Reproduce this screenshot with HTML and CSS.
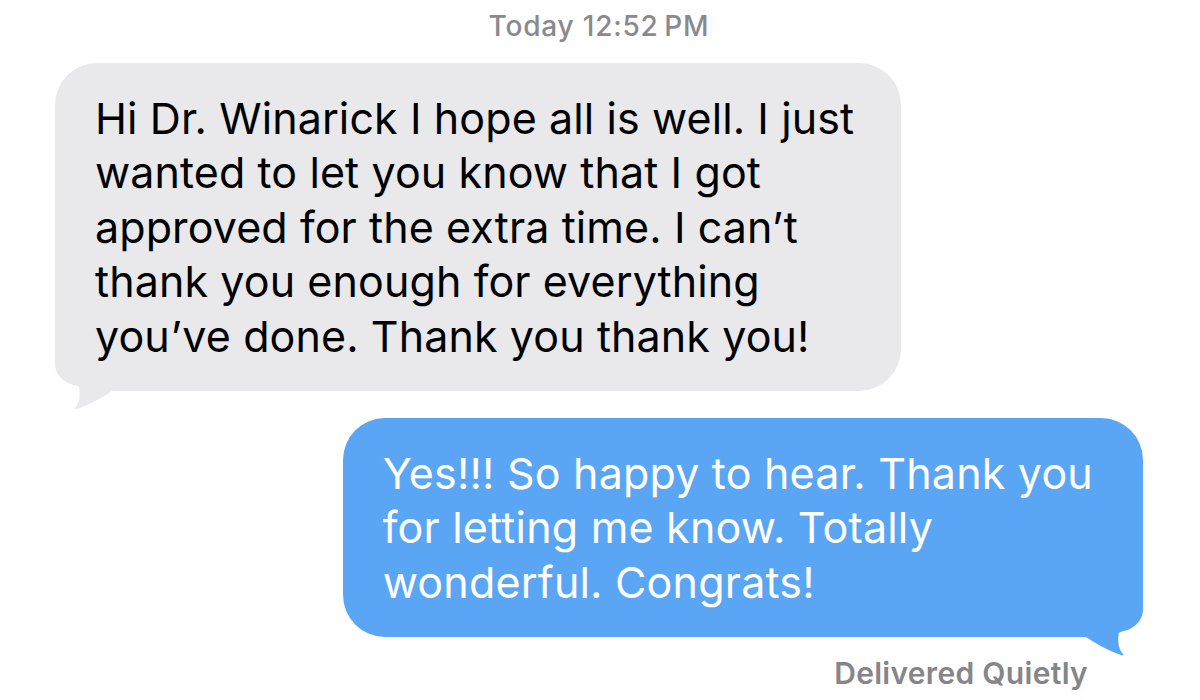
FILE: index.html
```html
<!DOCTYPE html>
<html lang="en">
<head>
    <meta charset="UTF-8">
    <meta name="viewport" content="width=device-width, initial-scale=1.0">
    <title>Messages</title>
    <link rel="stylesheet" href="styles.css">
</head>
<body>
    <div class="thread">
        <div class="stamp">Today 12:52&#8201;PM</div>

        <div class="bubble bubble-in">
            <svg class="tail tail-in" viewBox="0 0 70 70" width="70" height="70">
                <path d="M70,0 L70,22 C70,35 60,43 46,45 C44,55 46,63 50,67 C51,68 50,69 48,68 C34,63 22,56 13,50 L5,0 Z"/>
            </svg>
            <p class="text">
                Hi Dr. Winarick I hope all is well. I just<br>
                wanted to let you know that I got<br>
                approved for the extra time. I can’t<br>
                thank you enough for everything<br>
                you’ve done. Thank you thank you!
            </p>
        </div>

        <div class="bubble bubble-out">
            <svg class="tail tail-out" viewBox="0 0 70 70" width="70" height="70">
                <path d="M70,0 L70,22 C70,35 60,43 46,45 C44,55 46,63 50,67 C51,68 50,69 48,68 C34,63 22,56 13,50 L5,0 Z"/>
            </svg>
            <p class="text">
                Yes!!! So happy to hear. Thank you<br>
                for letting me know. Totally<br>
                wonderful. Congrats!
            </p>
        </div>

        <div class="status">Delivered Quietly</div>
    </div>
</body>
</html>
```

FILE: styles.css
```css
body {
    margin: 0;
    background-color: #ffffff;
    font-family: Inter, 'Noto Sans', sans-serif;
    width: 1200px;
    height: 700px;
    overflow: hidden;
}
.thread {
    display: flex;
    flex-direction: column;
    padding: 9px 57px 0 55px;
}
.stamp {
    align-self: center;
    font-size: 28px;
    line-height: 34px;
    font-weight: 500;
    letter-spacing: 0.8px;
    color: #8a8a8e;
    margin-bottom: 20px;
}
.bubble {
    position: relative;
    font-size: 43px;
    line-height: 54.4px;
    padding: 28px 47px 28px 40px;
    border-radius: 42px;
    letter-spacing: 0.1px;
}
.text {
    position: relative;
    margin: 0;
}
.bubble-in {
    align-self: flex-start;
    background-color: #e9e9eb;
    color: #000000;
}
.bubble-out {
    align-self: flex-end;
    margin-top: 27px;
    padding-right: 50px;
    letter-spacing: 0.2px;
    background-color: #5aa6f5;
    color: #ffffff;
}
.tail {
    position: absolute;
    bottom: -20px;
}
.tail-in {
    left: 0;
    fill: #e9e9eb;
    transform: scaleX(-1);
}
.tail-out {
    right: 0;
    fill: #5aa6f5;
}
.status {
    align-self: flex-end;
    margin: 18px 55px 0 0;
    font-size: 30px;
    line-height: 36px;
    font-weight: 600;
    letter-spacing: 0.3px;
    color: #85858a;
}
```
